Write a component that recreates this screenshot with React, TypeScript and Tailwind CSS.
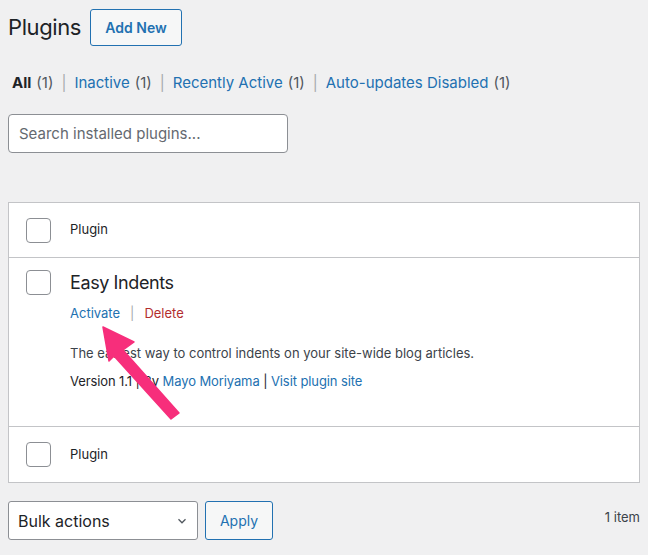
import React from "react";

function Box() {
  return <div className="w-[25px] h-[25px] rounded-[4px] border border-[#8c8f94] bg-white shrink-0" />;
}

export default function App() {
  return (
    <div className="relative w-[648px] h-[555px] bg-[#f0f0f1] text-[#1d2327] overflow-hidden" style={{ fontFamily: "Inter, 'Liberation Sans', sans-serif" }}>
      <div className="px-2 pt-[9px]">
        <div className="flex items-center gap-[9px] h-[37px]">
          <h1 className="text-[22px] font-normal tracking-[-0.4px]">Plugins</h1>
          <button className="h-[37px] w-[92px] rounded-[3px] border border-[#2271b1] bg-[#f6f7f7] text-[#2271b1] text-[14px] font-semibold">Add New</button>
        </div>
        <div className="mt-[25px] flex items-center h-[24px] pl-1 text-[15px] text-[#50575e]">
          <span className="font-bold text-[#1d2327]">All</span>
          <span className="ml-[5px]">(1)</span>
          <span className="mx-[8px] text-[#a7aaad]">|</span>
          <span className="text-[#2271b1]">Inactive</span>
          <span className="ml-[5px]">(1)</span>
          <span className="mx-[8px] text-[#a7aaad]">|</span>
          <span className="text-[#2271b1]">Recently Active</span>
          <span className="ml-[5px]">(1)</span>
          <span className="mx-[8px] text-[#a7aaad]">|</span>
          <span className="text-[#2271b1]">Auto-updates Disabled</span>
          <span className="ml-[5px]">(1)</span>
        </div>
        <div className="mt-[19px] w-[280px] h-[39px] rounded-[4px] border border-[#8c8f94] bg-white flex items-center px-[10px] pt-[2px] text-[15px] text-[#646970]">
          Search installed plugins...
        </div>
        <div className="mt-[49px] w-[632px] border border-[#c3c4c7] bg-white">
          <div className="h-[55px] flex items-center pl-[17px] gap-[19px] border-b border-[#c3c4c7]">
            <Box />
            <span className="text-[13px]">Plugin</span>
          </div>
          <div className="h-[168px] pl-[17px] pt-[12px] flex gap-[19px]">
            <Box />
            <div className="flex flex-col">
              <div className="text-[18px] leading-[25px] tracking-[-0.4px]">Easy Indents</div>
              <div className="mt-[9px] flex items-center text-[13px] leading-[18px]">
                <span className="text-[#2271b1]">Activate</span>
                <span className="mx-[10px] text-[#a7aaad]">|</span>
                <span className="text-[#b32d2e]">Delete</span>
              </div>
              <div className="mt-[22px] text-[13px] leading-[18px] text-[#3c434a]">The easiest way to control indents on your site-wide blog articles.</div>
              <div className="mt-[10px] text-[13px] leading-[18px] tracking-[-0.1px]">
                Version 1.1 | By <span className="text-[#2271b1]">Mayo Moriyama</span> | <span className="text-[#2271b1]">Visit plugin site</span>
              </div>
            </div>
          </div>
          <div className="h-[56px] flex items-center pl-[17px] gap-[19px] border-t border-[#c3c4c7]">
            <Box />
            <span className="text-[13px]">Plugin</span>
          </div>
        </div>
        <div className="mt-[18px] flex items-center w-[632px]">
          <div className="w-[190px] h-[39px] rounded-[3px] border border-[#8c8f94] bg-white flex items-center justify-between pl-[9px] pr-[8px] text-[16px]">
            <span>Bulk actions</span>
            <svg width="14" height="14" viewBox="0 0 20 20"><path d="M5 7.5l5 5 5-5" fill="none" stroke="#50575e" strokeWidth="1.8" /></svg>
          </div>
          <button className="ml-[7px] w-[68px] h-[39px] rounded-[3px] border border-[#2271b1] bg-[#f6f7f7] text-[#2271b1] text-[14px]">Apply</button>
          <span className="ml-auto text-[13px] text-[#3c434a] -mt-[5px]">1 item</span>
        </div>
      </div>
      <svg className="absolute left-0 top-0 pointer-events-none" width="648" height="555">
        <polygon points="103,327 134,342 123,350 179,413 171,419 114,356 109,361" fill="#f72e7b" strokeLinejoin="round" stroke="#f72e7b" strokeWidth="1.5" />
      </svg>
    </div>
  );
}
